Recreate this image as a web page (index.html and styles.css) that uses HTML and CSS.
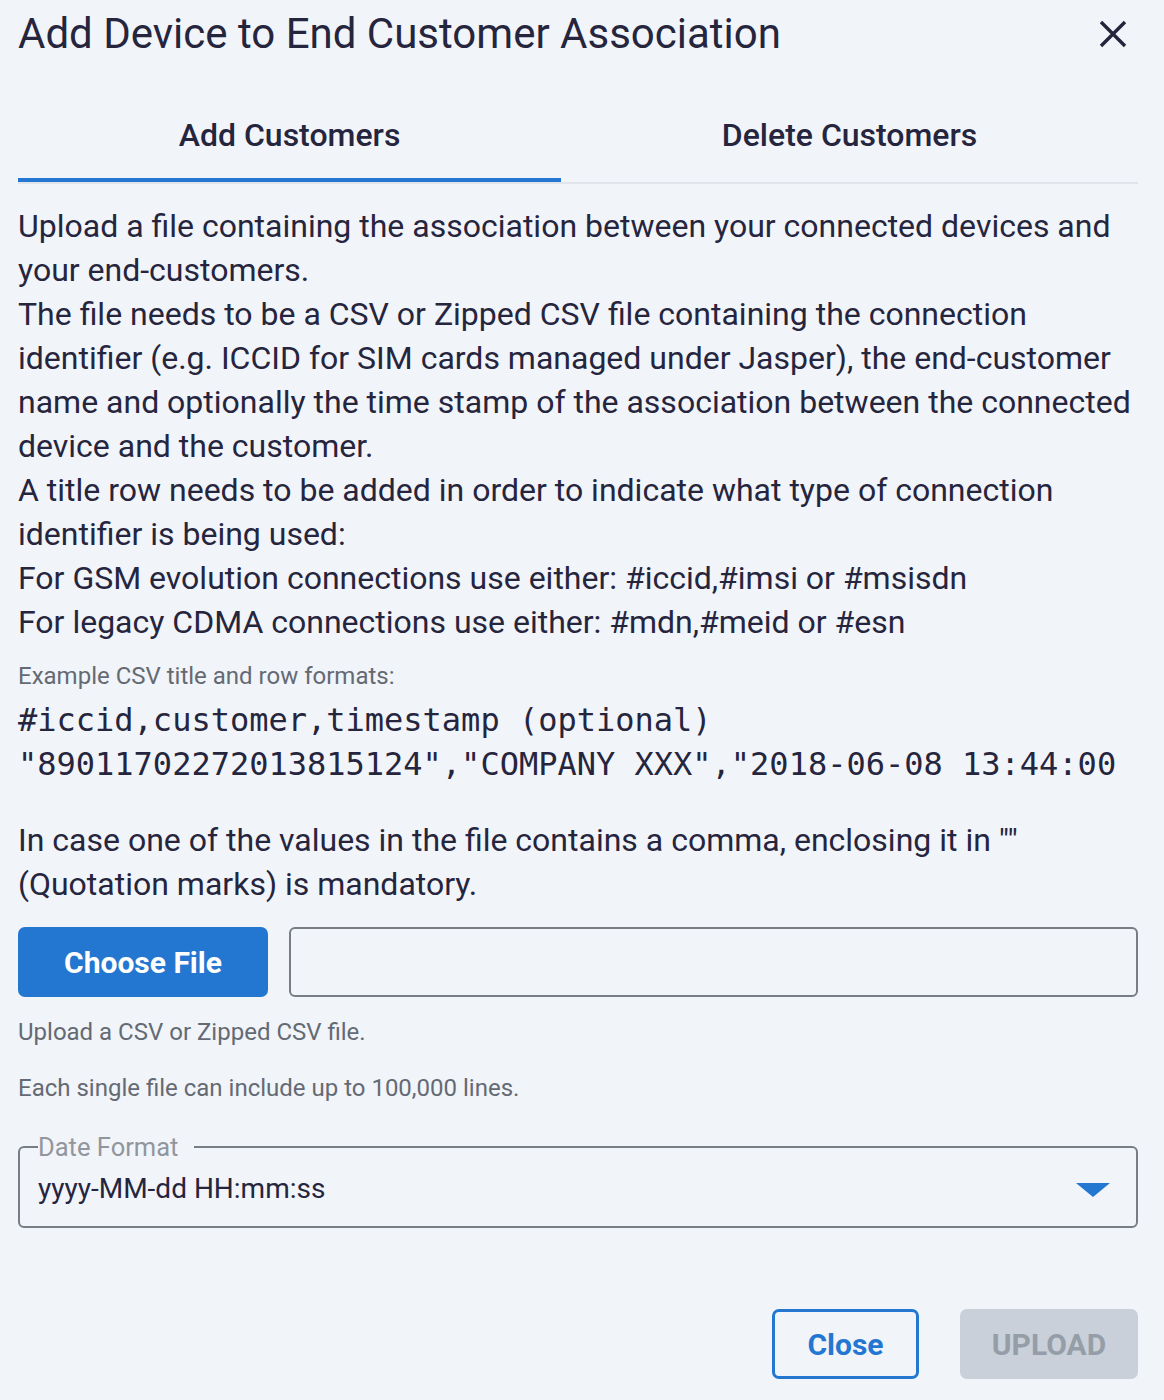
FILE: index.html
```html
<!DOCTYPE html>
<html lang="en">
<head>
<meta charset="utf-8">
<title>Add Device to End Customer Association</title>
<link rel="stylesheet" href="styles.css">
</head>
<body>
<div class="dialog">
  <header class="dialog-header">
    <h1 class="dialog-title">Add Device to End Customer Association</h1>
    <button class="icon-close" aria-label="Close">
      <svg width="28" height="28" viewBox="0 0 28 28"><path d="M2 2 L26 26 M26 2 L2 26" stroke="#25243d" stroke-width="3.4" fill="none"/></svg>
    </button>
  </header>

  <nav class="tabs">
    <div class="tab tab-active">Add Customers</div>
    <div class="tab">Delete Customers</div>
  </nav>

  <section class="content">
    <div class="description">
      <p>Upload a file containing the association between your connected devices and your end-customers.</p>
      <p>The file needs to be a CSV or Zipped CSV file containing the connection identifier (e.g. ICCID for SIM cards managed under Jasper), the end-customer name and optionally the time stamp of the association between the connected device and the customer.</p>
      <p>A title row needs to be added in order to indicate what type of connection identifier is being used:</p>
      <p>For GSM evolution connections use either: #iccid,#imsi or #msisdn</p>
      <p>For legacy CDMA connections use either: #mdn,#meid or #esn</p>
    </div>

    <p class="caption">Example CSV title and row formats:</p>
    <pre class="code">#iccid,customer,timestamp (optional)
"89011702272013815124","COMPANY XXX","2018-06-08 13:44:00</pre>

    <p class="note">In case one of the values in the file contains a comma, enclosing it in "" (Quotation marks) is mandatory.</p>

    <div class="file-row">
      <button class="btn btn-primary">Choose File</button>
      <div class="file-name"></div>
    </div>

    <p class="hint">Upload a CSV or Zipped CSV file.</p>
    <p class="hint hint-second">Each single file can include up to 100,000 lines.</p>

    <fieldset class="select-field">
      <legend class="select-label">Date Format</legend>
      <div class="select-row">
        <span class="select-value">yyyy-MM-dd HH:mm:ss</span>
        <span class="caret"></span>
      </div>
    </fieldset>
  </section>

  <footer class="actions">
    <button class="btn btn-outline">Close</button>
    <button class="btn btn-disabled">UPLOAD</button>
  </footer>
</div>
</body>
</html>
```

FILE: styles.css
```css
html, body {
  margin: 0;
  padding: 0;
  background: #f1f4f9;
}

body {
  font-family: Roboto, "Noto Sans", Arial, sans-serif;
  color: #26253e;
}

.dialog {
  padding: 10px 26px 0 18px;
}

.dialog-header {
  display: flex;
  align-items: center;
  justify-content: space-between;
}

.dialog-title {
  margin: 0;
  font-size: 42px;
  line-height: 48px;
  font-weight: 400;
  color: #26253e;
}

.icon-close {
  border: 0;
  background: none;
  padding: 0;
  margin-right: 11px;
  width: 28px;
  height: 28px;
  display: flex;
}

.tabs {
  display: flex;
  margin-top: 34px;
  border-bottom: 2px solid #e1e5eb;
}

.tab {
  flex: 1 1 auto;
  text-align: center;
  font-size: 32px;
  line-height: 44px;
  font-weight: 500;
  padding: 21px 0;
  border-bottom: 4px solid transparent;
  color: #26253e;
}

.tab-active {
  border-bottom-color: #2477d1;
}

.content {
  padding-top: 20px;
}

.description p {
  margin: 0;
  font-size: 32px;
  line-height: 44px;
}

.caption {
  margin: 15px 0 0;
  font-size: 24px;
  line-height: 34px;
  color: #646a73;
}

.code {
  margin: 5px 0 0;
  font-family: "DejaVu Sans Mono", "Liberation Mono", monospace;
  font-size: 32px;
  line-height: 44px;
  color: #26253e;
  white-space: pre;
}

.note {
  margin: 32px 0 0;
  font-size: 32px;
  line-height: 44px;
}

.file-row {
  display: flex;
  gap: 21px;
  margin-top: 21px;
  height: 70px;
}

.btn {
  font-family: Roboto, "Noto Sans", Arial, sans-serif;
  font-weight: 700;
  font-size: 30px;
  border-radius: 7px;
  height: 70px;
  padding: 0;
  cursor: pointer;
}

.btn-primary {
  width: 250px;
  background: #2477d1;
  color: #ffffff;
  border: 0;
}

.file-name {
  flex: 1;
  border: 2px solid #787d85;
  border-radius: 6px;
}

.hint {
  margin: 18px 0 0;
  font-size: 24px;
  line-height: 34px;
  color: #646a73;
}

.hint-second {
  margin-top: 22px;
}

.select-field {
  margin: 25px 0 0;
  padding: 0 26px 0 18px;
  border: 2px solid #787d85;
  border-radius: 6px;
}

.select-label {
  padding: 0 16px 0 0;
  font-size: 25.5px;
  line-height: 34px;
  color: #91969d;
}

.select-row {
  display: flex;
  align-items: center;
  justify-content: space-between;
  height: 40px;
  margin: 4px 0 18px;
}

.select-value {
  font-size: 28px;
  color: #26253e;
}

.caret {
  width: 0;
  height: 0;
  border-left: 17px solid transparent;
  border-right: 17px solid transparent;
  border-top: 14px solid #2477d1;
  margin-top: 4px;
}

.actions {
  display: flex;
  justify-content: flex-end;
  gap: 41px;
  margin-top: 81px;
}

.btn-outline {
  width: 147px;
  background: transparent;
  border: 3px solid #2477d1;
  color: #2477d1;
}

.btn-disabled {
  width: 178px;
  background: #c9d0d9;
  border: 0;
  color: #959ea8;
}
```
